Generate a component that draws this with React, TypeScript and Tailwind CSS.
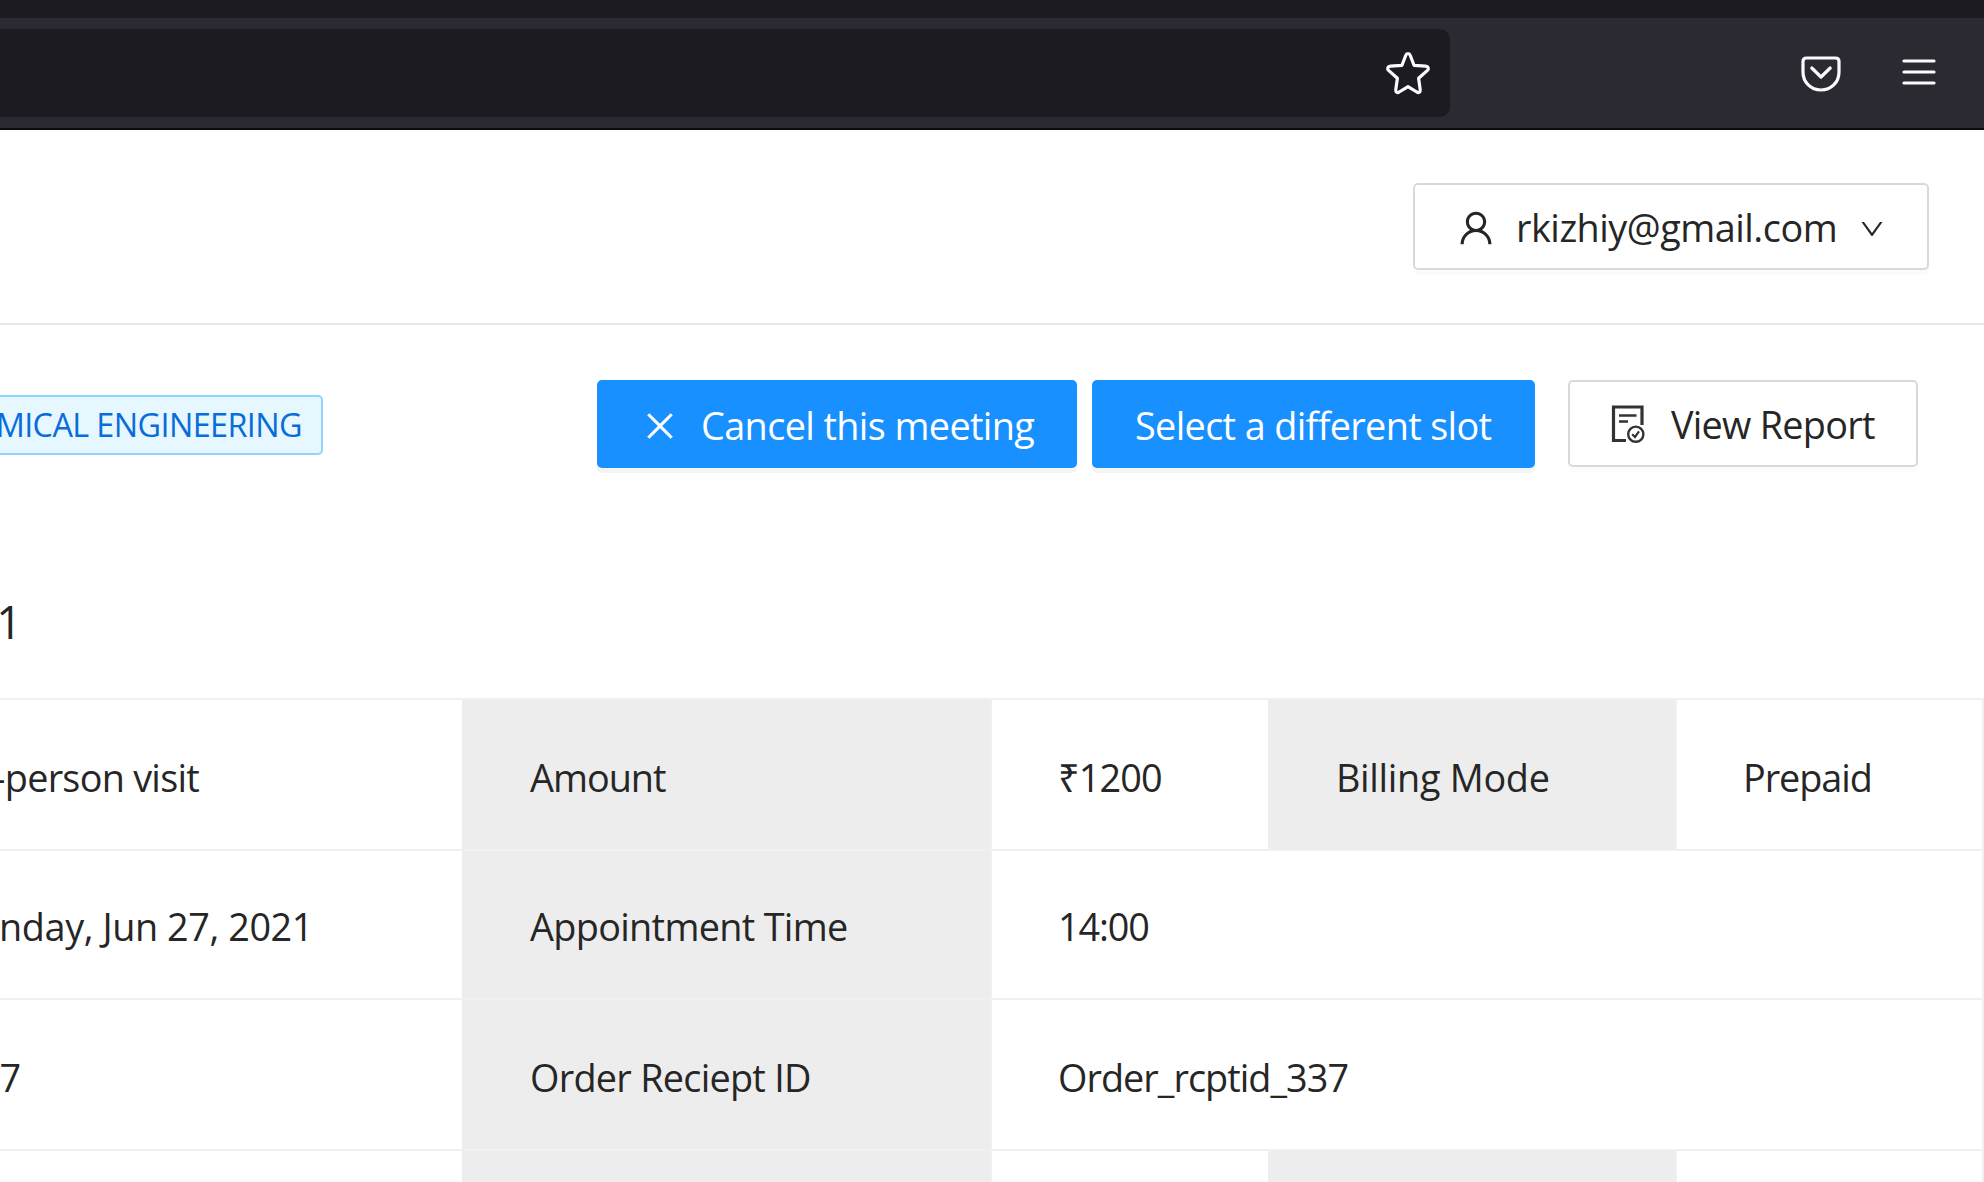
import { AiOutlineClose, AiOutlineDown, AiOutlineUser } from "react-icons/ai";

function StarIcon() {
  return (
    <svg className="mt-[2px] h-[48px] w-[48px]" viewBox="0 0 48 48" fill="none" stroke="#fbfbfe" strokeWidth="3.2" strokeLinejoin="round" strokeLinecap="round">
      <path d="M21.8 5.2 C22.6 2.9 25.4 2.9 26.2 5.2 L30 15.3 L41.6 16.2 C44.4 16.4 45.2 18.9 43.2 20.6 L34.6 28.3 L36.2 39.6 C36.6 42.2 34.9 43.2 32.8 42 L24 36.6 L15.2 42 C13.1 43.2 11.4 42.2 11.8 39.6 L13.4 28.3 L4.8 20.6 C2.8 18.9 3.6 16.4 6.4 16.2 L18 15.3 Z" />
    </svg>
  );
}

function PocketIcon() {
  return (
    <svg className="mt-[1px] h-[36px] w-[40px]" viewBox="0 0 40 36" fill="none" stroke="#fbfbfe" strokeWidth="3.2" strokeLinejoin="round" strokeLinecap="round">
      <path d="M5.5 2 H34.5 Q38 2 38 5.5 V16 C38 26.5 30 34 20 34 C10 34 2 26.5 2 16 V5.5 Q2 2 5.5 2 Z" />
      <path d="M10.8 12 L20 21 L29.2 12" />
    </svg>
  );
}

function MenuIcon() {
  return (
    <svg className="mb-[2px] h-[26px] w-[34px]" viewBox="0 0 34 26" stroke="#fbfbfe" strokeWidth="3.2" strokeLinecap="round">
      <path d="M2 2 H32 M2 13 H32 M2 24 H32" />
    </svg>
  );
}

function ReportIcon() {
  return (
    <svg className="h-[38px] w-[38px]" viewBox="0 0 38 38" fill="none" stroke="#333333">
      <path d="M31 20 V2 H2.5 V35.5 H15" strokeWidth="3.2" />
      <path d="M8 10.5 H25.5 M8 16.5 H17" strokeWidth="2.6" />
      <circle cx="24.8" cy="29.2" r="7.6" strokeWidth="2.4" />
      <path d="M21.2 29.2 L24 32 L28 26.4" strokeWidth="2.2" />
    </svg>
  );
}

function BrowserBar() {
  return (
    <div className="h-[130px] border-b-2 border-[#0c0c0d] bg-[#2b2a33]">
      <div className="h-[18px] bg-[#1c1b22]" />
      <div className="flex items-start pt-[11px]">
        <div className="flex h-[88px] w-[1450px] items-center justify-end rounded-r-[10px] bg-[#1c1b22] pr-[18px]">
          <StarIcon />
        </div>
        <div className="flex h-[88px] flex-1 items-center justify-end gap-[61px] pr-[48px]">
          <PocketIcon />
          <MenuIcon />
        </div>
      </div>
    </div>
  );
}

const cell = "flex items-center border-b-2 border-[#f0f0f0] whitespace-nowrap";
const label = "border-r-2 bg-[#ededed] pl-[68px]";
const value = "pl-[66px]";

export default function App() {
  return (
    <div className="h-[1182px] w-[1984px] overflow-hidden bg-white font-['Open_Sans','Noto_Sans',sans-serif] text-[37.8px] leading-none text-[#262626]">
      <BrowserBar />

      <header className="flex h-[195px] justify-end border-b-2 border-[#e6e6e6] pt-[53px] pr-[55px]">
        <button className="flex h-[87px] w-[516px] items-center rounded-[5px] border-2 border-[#d9d9d9] bg-white pl-[40px] shadow-[0_5px_0_rgba(0,0,0,0.016)]">
          <AiOutlineUser className="mt-[3px] size-[42px]" />
          <span className="ml-[19px] pt-[2px] tracking-[-0.49px]">rkizhiy@gmail.com</span>
          <AiOutlineDown className="mt-[5px] ml-[21px] size-[28px]" />
        </button>
      </header>

      <div className="flex h-[233px] items-start pt-[55px]">
        <div className="mt-[15px] flex h-[60px] w-[323px] items-center justify-end rounded-r-[5px] border-2 border-l-0 border-[#91d5ff] bg-[#e6f7ff] pr-[19px] pb-[2px] text-[32.4px] tracking-[-0.61px] whitespace-nowrap text-[#096dd9]">
          MICAL ENGINEERING
        </div>
        <button className="ml-[274px] flex h-[88px] w-[480px] items-center rounded-[5px] bg-[#1890ff] pl-[44px] text-white shadow-[0_5px_0_rgba(0,0,0,0.045)]">
          <AiOutlineClose className="mt-[3px] size-[38px]" />
          <span className="ml-[22px] pt-[3px] tracking-[-0.61px]">Cancel this meeting</span>
        </button>
        <button className="ml-[15px] flex h-[88px] w-[443px] items-center rounded-[5px] bg-[#1890ff] pl-[43px] text-white shadow-[0_5px_0_rgba(0,0,0,0.045)]">
          <span className="pt-[3px] tracking-[-0.64px]">Select a different slot</span>
        </button>
        <button className="ml-[33px] flex h-[87px] w-[350px] items-center rounded-[5px] border-2 border-[#d9d9d9] bg-white pl-[41px] shadow-[0_5px_0_rgba(0,0,0,0.016)]">
          <ReportIcon />
          <span className="ml-[22px] pt-[3px] tracking-[-0.73px]">View Report</span>
        </button>
      </div>

      <div className="flex h-[140px] w-[22px] items-center justify-end pb-[14px] text-[45px]">1</div>

      <div className="grid grid-cols-[462px_530px_276px_409px_305px_2px] grid-rows-[151px_149px_151px_151px] border-t-2 border-[#f0f0f0]">
        <div className={`${cell} pt-[6px]`}>
          <span className="flex w-[199px] justify-end tracking-[-0.73px]">-person visit</span>
        </div>
        <div className={`${cell} ${label} pt-[6px] tracking-[-1px]`}>Amount</div>
        <div className={`${cell} ${value} pt-[6px] tracking-[-0.88px]`}>₹1200</div>
        <div className={`${cell} ${label} pt-[6px] tracking-[-0.3px]`}>Billing Mode</div>
        <div className={`${cell} ${value} pt-[6px] tracking-[-1.05px]`}>Prepaid</div>
        <div className="row-span-4 bg-[#f0f0f0]" />

        <div className={`${cell} pt-[4px]`}>
          <span className="flex w-[313px] justify-end tracking-[-0.42px]">nday, Jun 27, 2021</span>
        </div>
        <div className={`${cell} ${label} pt-[4px] tracking-[-0.67px]`}>Appointment Time</div>
        <div className={`${cell} ${value} col-span-3 pt-[4px] tracking-[-1.12px]`}>14:00</div>

        <div className={`${cell} pt-[6px]`}>
          <span className="flex w-[21px] justify-end">7</span>
        </div>
        <div className={`${cell} ${label} pt-[6px] tracking-[-0.72px]`}>Order Reciept ID</div>
        <div className={`${cell} ${value} col-span-3 pt-[6px] tracking-[-0.96px]`}>Order_rcptid_337</div>

        <div className={cell} />
        <div className={`${cell} ${label}`} />
        <div className={`${cell} ${value}`} />
        <div className={`${cell} ${label}`} />
        <div className={`${cell} ${value}`} />
      </div>
    </div>
  );
}
